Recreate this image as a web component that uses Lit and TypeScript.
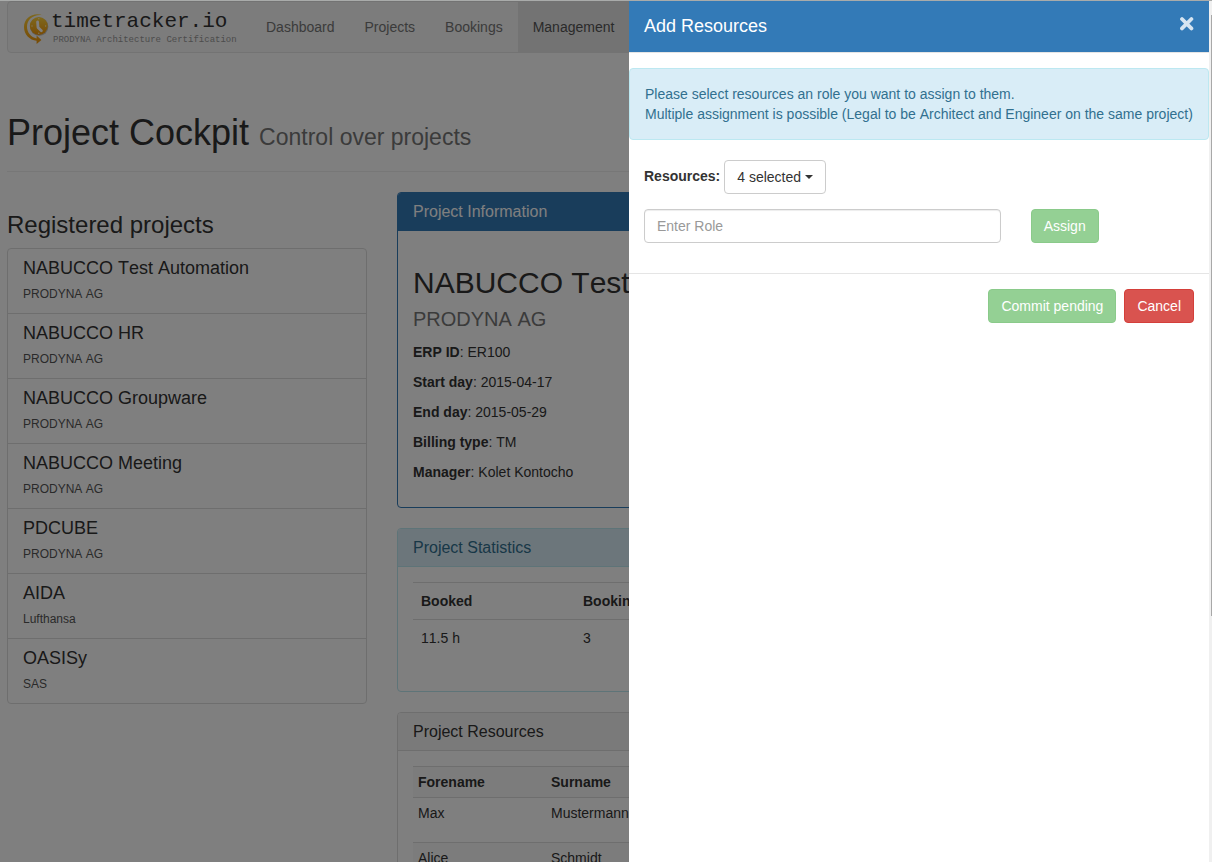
import { LitElement, html, css, svg } from "lit";
import { customElement, state } from "lit/decorators.js";

interface Project {
  name: string;
  customer: string;
}

const NAV = ["Dashboard", "Projects", "Bookings", "Management"];

const PROJECTS: Project[] = [
  { name: "NABUCCO Test Automation", customer: "PRODYNA AG" },
  { name: "NABUCCO HR", customer: "PRODYNA AG" },
  { name: "NABUCCO Groupware", customer: "PRODYNA AG" },
  { name: "NABUCCO Meeting", customer: "PRODYNA AG" },
  { name: "PDCUBE", customer: "PRODYNA AG" },
  { name: "AIDA", customer: "Lufthansa" },
  { name: "OASISy", customer: "SAS" },
];

const FACTS = [
  ["ERP ID", "ER100"],
  ["Start day", "2015-04-17"],
  ["End day", "2015-05-29"],
  ["Billing type", "TM"],
  ["Manager", "Kolet Kontocho"],
];

const RESOURCES = [
  ["Max", "Mustermann"],
  ["Alice", "Schmidt"],
];

const clockLogo = html`
  <svg class="logo-icon" width="26" height="32" viewBox="0 0 26 32" aria-hidden="true">
    ${svg`
      <defs>
        <linearGradient id="amber" x1="0" y1="0" x2="0" y2="1">
          <stop offset="0" stop-color="#ffd23a"></stop>
          <stop offset="1" stop-color="#f0960a"></stop>
        </linearGradient>
      </defs>
      <circle cx="16.2" cy="13.8" r="9.2" fill="#000" opacity="0.2"></circle>
      <circle cx="15.8" cy="13" r="9" fill="url(#amber)"></circle>
      <path d="M20 2.4 C11 -1.2 1 4.4 1 14 C1 21.4 6.6 27.2 13.6 27.8 L13.6 31 L18.4 27 L13.6 22.6 L13.6 25.4 C8 24.4 4 19.6 4 13.8 C4 6 11.4 0.6 20 2.4 Z" fill="url(#amber)"></path>
      <path d="M14.6 9 L15 14.4 L18.4 17.8" fill="none" stroke="#fff" stroke-width="2.8" stroke-linecap="round" stroke-linejoin="round"></path>
      <g fill="#fff3c0">
        <circle cx="9" cy="13" r="0.7"></circle>
        <circle cx="22.6" cy="13" r="0.7"></circle>
        <circle cx="15.8" cy="20.2" r="0.7"></circle>
        <circle cx="15.8" cy="5.8" r="0.7"></circle>
      </g>`}
  </svg>
`;

@customElement("app-root")
export class AppRoot extends LitElement {
  @state() private role = "";

  static styles = css`
    :host {
      display: block;
      position: relative;
      height: 100vh;
      overflow: hidden;
      box-sizing: border-box;
      border-top: 1px solid #a9abaa;
      background: #fff;
      color: #333;
      font: 14px/20px "Liberation Sans", Arial, sans-serif;
      font-kerning: none;
    }
    *, *::before, *::after { box-sizing: border-box; }
    h1, h2, h3, h4, p { margin: 0; font-weight: 400; }
    a { color: inherit; text-decoration: none; }

    .page { max-width: 1154px; padding: 0 7px; }

    .navbar {
      display: flex;
      height: 52px;
      border: 1px solid #e7e7e7;
      border-radius: 4px;
      background: #f8f8f8;
    }
    .brand {
      display: flex;
      flex: 0 0 243px;
      gap: 2px;
      padding: 11px 0 0 15px;
      font-family: "Liberation Mono", monospace;
      white-space: nowrap;
    }
    .logo-icon { flex: none; }
    .brand-text { display: flex; flex-direction: column; }
    .brand-name { font-size: 21px; line-height: 18px; color: #333; }
    .brand-sub { padding-left: 2px; font-size: 9px; line-height: 18px; color: #999; }
    .nav { display: flex; margin: 0; padding: 0; list-style: none; }
    .nav-link { display: block; padding: 15px; color: #777; }
    .nav-link.active { background: #e7e7e7; color: #555; }

    .page-header { margin: 60px 0 20px; padding-bottom: 18px; border-bottom: 1px solid #eee; }
    .title { font-size: 36px; line-height: 40px; }
    .title-note { font-size: 23px; line-height: 23px; color: #777; }

    .columns { display: grid; grid-template-columns: 360px minmax(0, 1fr); gap: 30px; align-items: start; }
    .side-title { padding: 20px 0 10px; font-size: 24px; line-height: 26px; }
    .list { margin: 0; padding: 0; list-style: none; border: 1px solid #ddd; border-radius: 4px; }
    .list-item + .list-item { border-top: 1px solid #ddd; }
    .list-link { display: block; padding: 9px 15px; }
    .list-name { margin-bottom: 6px; font-size: 18px; line-height: 20px; }
    .list-customer { font-size: 12px; line-height: 20px; color: #555; }

    .panel { margin-bottom: 20px; border: 1px solid #ddd; border-radius: 4px; overflow: hidden; }
    .panel-title { padding: 10px 15px; border-bottom: 1px solid #ddd; background: #f5f5f5; font-size: 16px; line-height: 17px; }
    .panel-body { padding: 15px; }
    .panel.primary { border-color: #337ab7; }
    .primary .panel-title { border-color: #337ab7; background: #337ab7; color: #fff; }
    .panel.info { border-color: #bce8f1; }
    .info .panel-title { border-color: #bce8f1; background: #d9edf7; color: #31708f; }
    .project { padding: 20px 0 10px; font-size: 30px; line-height: 33px; }
    .project-customer { font-size: 20px; line-height: 20px; color: #777; }
    .fact { margin-bottom: 10px; }

    .table { width: 100%; margin-bottom: 20px; border-collapse: separate; border-spacing: 0; table-layout: fixed; }
    .table th, .table td { padding: 8px; border-top: 1px solid #ddd; text-align: left; vertical-align: top; }
    .table.condensed th, .table.condensed td { padding: 5px; }
    .table.condensed td { height: 45px; }
    .table.condensed tr:nth-child(odd) > * { background: #f9f9f9; }
    .col-stat { width: 162px; }
    .col-person { width: 133px; }

    .backdrop { position: absolute; inset: 0; background: rgba(0, 0, 0, 0.5); }

    .drawer {
      position: absolute;
      inset: 0 3px 0 auto;
      width: 580px;
      max-width: 100%;
      background: #fff;
    }
    .drawer-head {
      display: flex;
      justify-content: space-between;
      align-items: flex-start;
      height: 52px;
      padding: 15px;
      border-bottom: 1px solid #e5e5e5;
      background: #337ab7;
      background-clip: padding-box;
      color: #fff;
    }
    .drawer-title { font-size: 18px; line-height: 20px; }
    .close { display: flex; padding: 0; border: 0; background: none; color: #d6e4f1; cursor: pointer; }
    .drawer-body { padding: 15px 0; }
    .alert {
      margin-bottom: 20px;
      padding: 15px;
      border: 1px solid #bce8f1;
      border-radius: 4px;
      background: #d9edf7;
      color: #31708f;
    }
    .pick { display: flex; gap: 4px; padding: 0 15px; margin-bottom: 15px; }
    .pick-label { padding-top: 6px; font-weight: 700; }
    .assign { display: grid; grid-template-columns: 2fr 1fr; padding-bottom: 15px; }
    .cell { padding: 0 15px; }
    .input {
      display: block;
      width: 100%;
      height: 34px;
      padding: 6px 12px;
      border: 1px solid #ccc;
      border-radius: 4px;
      box-shadow: inset 0 1px 1px rgba(0, 0, 0, 0.075);
      background: #fff;
      color: #555;
      font: inherit;
    }
    .input::placeholder { color: #999; opacity: 1; }
    .btn {
      display: inline-flex;
      align-items: center;
      gap: 4px;
      height: 34px;
      padding: 6px 12px;
      border: 1px solid #ccc;
      border-radius: 4px;
      background: #fff;
      color: #333;
      font: inherit;
      cursor: pointer;
    }
    .btn.success { border-color: #4cae4c; background: #5cb85c; color: #fff; }
    .btn.danger { border-color: #d43f3a; background: #d9534f; color: #fff; }
    .btn:disabled { opacity: 0.65; cursor: not-allowed; }
    .caret { border: 4px solid transparent; border-top-color: currentColor; border-bottom: 0; }
    .drawer-foot { display: flex; justify-content: flex-end; gap: 8px; padding: 15px; border-top: 1px solid #e5e5e5; }

    .scroll { position: absolute; inset: 0 0 0 auto; width: 3px; padding: 14px 0 0 2px; background: #f0f0f0; }
    .thumb { height: 71%; background: #a8a8a8; }
  `;

  private renderNavbar() {
    return html`
      <nav class="navbar">
        <a class="brand" href="#">
          ${clockLogo}
          <span class="brand-text">
            <span class="brand-name">timetracker.io</span>
            <span class="brand-sub">PRODYNA Architecture Certification</span>
          </span>
        </a>
        <ul class="nav">
          ${NAV.map(
            (n) => html`<li><a class="nav-link ${n === "Management" ? "active" : ""}" href="#">${n}</a></li>`
          )}
        </ul>
      </nav>
    `;
  }

  private renderPanels() {
    return html`
      <section class="panel primary">
        <h3 class="panel-title">Project Information</h3>
        <div class="panel-body">
          <h2 class="project">NABUCCO Test Automation<br /><small class="project-customer">PRODYNA AG</small></h2>
          ${FACTS.map(([k, v]) => html`<p class="fact"><strong>${k}</strong>: ${v}</p>`)}
        </div>
      </section>
      <section class="panel info">
        <h3 class="panel-title">Project Statistics</h3>
        <div class="panel-body">
          <table class="table">
            <colgroup><col class="col-stat" /><col /></colgroup>
            <tbody>
              <tr><th scope="col">Booked</th><th scope="col">Bookings</th></tr>
              <tr><td>11.5 h</td><td>3</td></tr>
            </tbody>
          </table>
        </div>
      </section>
      <section class="panel">
        <h3 class="panel-title">Project Resources</h3>
        <div class="panel-body">
          <table class="table condensed">
            <colgroup><col class="col-person" /><col /></colgroup>
            <tbody>
              <tr><th scope="col">Forename</th><th scope="col">Surname</th></tr>
              ${RESOURCES.map(([f, s]) => html`<tr><td>${f}</td><td>${s}</td></tr>`)}
            </tbody>
          </table>
        </div>
      </section>
    `;
  }

  private renderDrawer() {
    return html`
      <aside class="drawer" role="dialog" aria-labelledby="drawer-title">
        <header class="drawer-head">
          <h4 class="drawer-title" id="drawer-title">Add Resources</h4>
          <button class="close" type="button" aria-label="Close">
            <svg width="15" height="15" viewBox="0 0 15 15" aria-hidden="true">
              <path d="M3 3 L12.4 12.4 M12.4 3 L3 12.4" stroke="currentColor" stroke-width="3.8" stroke-linecap="round"></path>
            </svg>
          </button>
        </header>
        <div class="drawer-body">
          <div class="alert">
            Please select resources an role you want to assign to them.<br />
            Multiple assignment is possible (Legal to be Architect and Engineer on the same project)
          </div>
          <div class="pick">
            <label class="pick-label" for="resources">Resources:</label>
            <button class="btn" id="resources" type="button" aria-haspopup="listbox">
              4 selected<span class="caret"></span>
            </button>
          </div>
          <div class="assign">
            <div class="cell">
              <input
                class="input"
                type="text"
                aria-label="Role"
                placeholder="Enter Role"
                .value=${this.role}
                @input=${(e: Event) => (this.role = (e.target as HTMLInputElement).value)}
              />
            </div>
            <div class="cell"><button class="btn success" type="button" ?disabled=${!this.role}>Assign</button></div>
          </div>
        </div>
        <footer class="drawer-foot">
          <button class="btn success" type="button" disabled>Commit pending</button>
          <button class="btn danger" type="button">Cancel</button>
        </footer>
      </aside>
    `;
  }

  render() {
    return html`
      <div class="page">
        ${this.renderNavbar()}
        <header class="page-header">
          <h1 class="title">Project Cockpit <small class="title-note">Control over projects</small></h1>
        </header>
        <main class="columns">
          <section>
            <h3 class="side-title">Registered projects</h3>
            <ul class="list">
              ${PROJECTS.map(
                (p) => html`
                  <li class="list-item">
                    <a class="list-link" href="#">
                      <h4 class="list-name">${p.name}</h4>
                      <p class="list-customer">${p.customer}</p>
                    </a>
                  </li>
                `
              )}
            </ul>
          </section>
          <div>${this.renderPanels()}</div>
        </main>
      </div>
      <div class="backdrop"></div>
      ${this.renderDrawer()}
      <div class="scroll"><div class="thumb"></div></div>
    `;
  }
}
